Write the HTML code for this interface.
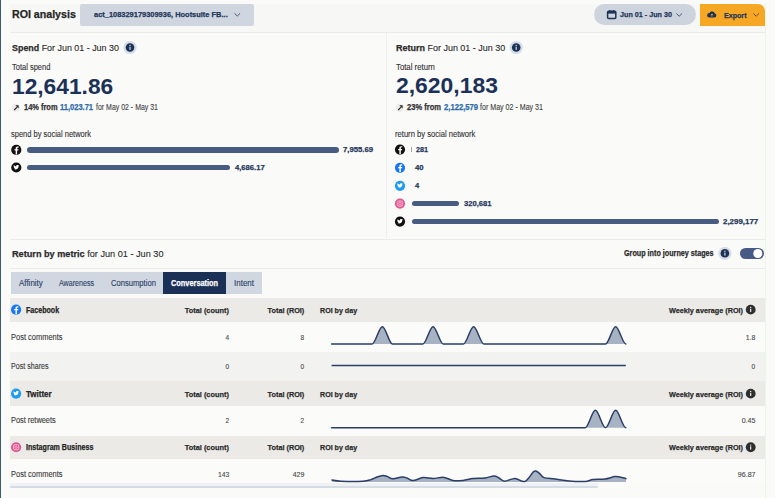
<!DOCTYPE html>
<html><head><meta charset="utf-8"><style>
html,body{margin:0;padding:0;}
body{width:775px;height:498px;overflow:hidden;background:#fafaf9;position:relative;font-family:"Liberation Sans", sans-serif;}
.b{position:absolute;}
.t{position:absolute;white-space:nowrap;-webkit-text-stroke:0.12px currentColor;}
.t[style*="font-weight:700"],.t b{-webkit-text-stroke:0.25px currentColor;}
.big{-webkit-text-stroke:0 !important;}
.t b{font-weight:700;}
svg{position:absolute;left:0;top:0;}
</style></head><body>
<div class="b" style="left:0px;top:0px;width:1.2px;height:498px;background:#3e5c67;border-radius:0;"></div><div class="b" style="left:10px;top:4px;width:755px;height:27.6px;background:#f7f7f5;border-radius:0;"></div><div class="b" style="left:80px;top:4px;width:174px;height:21.5px;background:#cfd6df;border-radius:2px;"></div><div class="b" style="left:594px;top:4.2px;width:101.70000000000005px;height:21.0px;background:#cdd4de;border-radius:11px;"></div><div class="b" style="left:699.6px;top:4.2px;width:65px;height:21.4px;background:#f6a723;border-radius:0 7px 0 0"></div><div class="b" style="left:765px;top:4px;width:1.2000000000000455px;height:494px;background:#e8f6e6;border-radius:0;"></div><div class="b" style="left:10px;top:31.6px;width:755px;height:1.0px;background:#ebebe9;border-radius:0;"></div><div class="b" style="left:386px;top:32.6px;width:1px;height:205.9px;background:#efefed;border-radius:0;"></div><div class="b" style="left:26.8px;top:147.4px;width:311.9px;height:5.199999999999989px;background:#485b80;border-radius:3px;"></div><div class="b" style="left:26.8px;top:165.0px;width:203.5px;height:5.199999999999989px;background:#485b80;border-radius:3px;"></div><div class="b" style="left:411.4px;top:146.79999999999998px;width:1.0px;height:5.600000000000023px;background:#9aa5b8;border-radius:0;"></div><div class="b" style="left:411.6px;top:201.0px;width:47.799999999999955px;height:5.199999999999989px;background:#485b80;border-radius:3px;"></div><div class="b" style="left:411.6px;top:219.0px;width:307.19999999999993px;height:5.199999999999989px;background:#485b80;border-radius:3px;"></div><div class="b" style="left:10px;top:238.5px;width:755px;height:1.0px;background:#ebebe9;border-radius:0;"></div><div class="b" style="left:740px;top:247.7px;width:23.600000000000023px;height:11.699999999999989px;background:#465a85;border-radius:6px;"></div><div class="b" style="left:10px;top:268px;width:755px;height:1px;background:#ebebe9;border-radius:0;"></div><div class="b" style="left:11.4px;top:272.3px;width:250.49999999999997px;height:21.5px;background:#d0d7e1;border-radius:0;"></div><div class="b" style="left:163.3px;top:272.3px;width:63.099999999999994px;height:21.5px;background:#1b3057;border-radius:0;"></div><div class="b" style="left:10px;top:297.6px;width:755px;height:24.099999999999966px;background:#ebeae7;border-radius:0;"></div><div class="b" style="left:10px;top:321.7px;width:755px;height:30.69999999999999px;background:#fbfbfa;border-radius:0;"></div><div class="b" style="left:10px;top:352.4px;width:755px;height:29.0px;background:#f2f2f0;border-radius:0;"></div><div class="b" style="left:10px;top:381.4px;width:755px;height:24.5px;background:#ebeae7;border-radius:0;"></div><div class="b" style="left:10px;top:405.9px;width:755px;height:29.700000000000045px;background:#fbfbfa;border-radius:0;"></div><div class="b" style="left:10px;top:435.6px;width:755px;height:23.299999999999955px;background:#ebeae7;border-radius:0;"></div><div class="b" style="left:10px;top:458.9px;width:755px;height:30.600000000000023px;background:#fbfbfa;border-radius:0;"></div><div class="b" style="left:10px;top:483px;width:588px;height:3px;background:#eef1f5;border-radius:0;"></div><div class="b" style="left:10px;top:485.8px;width:588px;height:2.3999999999999773px;background:#d6dce4;border-radius:1px;"></div><div class="b" style="left:598px;top:483px;width:167px;height:6.5px;background:#fafaf9;border-radius:0;"></div>
<svg width="775" height="498" viewBox="0 0 775 498"><path d="M234.5 13.3 L237.3 16 L240.1 13.3" fill="none" stroke="#3a4c6c" stroke-width="0.9"/><rect x="607.6" y="11.3" width="8.2" height="7.3" rx="1" fill="none" stroke="#1f3357" stroke-width="1.5"/><rect x="607.6" y="11.3" width="8.2" height="2.3" fill="#1f3357"/><rect x="609.3" y="10" width="1.2" height="2" fill="#1f3357"/><rect x="612.9" y="10" width="1.2" height="2" fill="#1f3357"/><path d="M676.3 13.5 L679.2 16.2 L682.1 13.5" fill="none" stroke="#3a4c6c" stroke-width="0.9"/><path d="M709.3 17.6 h5.2 a2.1 2.1 0 0 0 0.4 -4.1 a2.9 2.9 0 0 0 -5.4 -0.5 a2.3 2.3 0 0 0 -0.2 4.6z" fill="#1f3357"/><path d="M711.9 16.6 v-2.6 M710.8 15.1 l1.1 -1.1 l1.1 1.1" stroke="#f6a723" stroke-width="0.8" fill="none"/><path d="M753.3 13.4 L756.2 16.2 L759.1 13.4" fill="none" stroke="#6a5630" stroke-width="1"/><circle cx="130" cy="47.5" r="6.6" fill="#d6dde7"/><circle cx="130" cy="47.5" r="4.3" fill="#1c3157"/><rect x="129.35" y="46.8" width="1.3" height="3.0" fill="#c9d1dd"/><rect x="129.35" y="44.9" width="1.3" height="1.2" fill="#c9d1dd"/><circle cx="15.9" cy="107.7" r="4.2" fill="#ececea"/><path d="M14.200000000000001 110.0 L17.1 107.10000000000001" stroke="#2a2a2a" stroke-width="1.2" fill="none"/><path d="M15.3 105.3 L18.6 105.3 L18.6 108.60000000000001Z" fill="#2a2a2a"/><circle cx="16.3" cy="149.9" r="5.1" fill="#111"/><g transform="translate(16.6 150.20000000000002) scale(0.85) translate(-16.3 -149.9)"><path d="M16.900000000000002 154.9 V150.20000000000002 H18.3 L18.5 148.70000000000002 H16.900000000000002 V147.8 C16.900000000000002 147.20000000000002 17.2 146.9 17.8 146.9 H18.6 V145.6 C18.3 145.5 17.8 145.5 17.400000000000002 145.5 C16.0 145.5 15.200000000000001 146.4 15.200000000000001 147.70000000000002 V148.70000000000002 H13.8 V150.20000000000002 H15.200000000000001 V154.9Z" fill="#fff"/></g><circle cx="16.3" cy="167.5" r="5.1" fill="#111"/><g transform="translate(16.3 167.5) scale(0.85) translate(-16.3 -167.5)"><path d="M13.3 169.3 C15.3 170.5 18.900000000000002 169.5 19.0 165.9 L19.7 165.1 L18.900000000000002 165.3 L19.3 164.5 L18.400000000000002 164.8 C17.5 163.9 15.8 164.7 16.2 166.1 C14.9 166.0 13.9 165.3 13.3 164.6 C12.9 165.6 13.3 166.5 13.9 166.9 L13.3 166.7 C13.3 167.5 13.9 168.2 14.5 168.3 L13.8 168.4 C14.100000000000001 169.0 14.700000000000001 169.3 15.100000000000001 169.3 C14.5 169.7 13.9 169.5 13.3 169.3Z" fill="#fff"/></g><circle cx="516.2" cy="47.5" r="6.6" fill="#d6dde7"/><circle cx="516.2" cy="47.5" r="4.3" fill="#1c3157"/><rect x="515.5500000000001" y="46.8" width="1.3" height="3.0" fill="#c9d1dd"/><rect x="515.5500000000001" y="44.9" width="1.3" height="1.2" fill="#c9d1dd"/><circle cx="399.9" cy="107.7" r="4.2" fill="#ececea"/><path d="M398.2 110.0 L401.09999999999997 107.10000000000001" stroke="#2a2a2a" stroke-width="1.2" fill="none"/><path d="M399.29999999999995 105.3 L402.59999999999997 105.3 L402.59999999999997 108.60000000000001Z" fill="#2a2a2a"/><circle cx="400" cy="149.6" r="5.1" fill="#111"/><g transform="translate(400.3 149.9) scale(0.85) translate(-400 -149.6)"><path d="M400.6 154.6 V149.9 H402 L402.2 148.4 H400.6 V147.5 C400.6 146.9 400.9 146.6 401.5 146.6 H402.3 V145.29999999999998 C402 145.2 401.5 145.2 401.1 145.2 C399.7 145.2 398.9 146.1 398.9 147.4 V148.4 H397.5 V149.9 H398.9 V154.6Z" fill="#fff"/></g><circle cx="400" cy="167.8" r="5.1" fill="#1877f2"/><g transform="translate(400.3 168.10000000000002) scale(0.85) translate(-400 -167.8)"><path d="M400.6 172.8 V168.10000000000002 H402 L402.2 166.60000000000002 H400.6 V165.70000000000002 C400.6 165.10000000000002 400.9 164.8 401.5 164.8 H402.3 V163.5 C402 163.4 401.5 163.4 401.1 163.4 C399.7 163.4 398.9 164.3 398.9 165.60000000000002 V166.60000000000002 H397.5 V168.10000000000002 H398.9 V172.8Z" fill="#fff"/></g><circle cx="400" cy="185.8" r="5.1" fill="#1d9bf0"/><g transform="translate(400 185.8) scale(0.85) translate(-400 -185.8)"><path d="M397 187.60000000000002 C399 188.8 402.6 187.8 402.7 184.20000000000002 L403.4 183.4 L402.6 183.60000000000002 L403 182.8 L402.1 183.10000000000002 C401.2 182.20000000000002 399.5 183.0 399.9 184.4 C398.6 184.3 397.6 183.60000000000002 397 182.9 C396.6 183.9 397 184.8 397.6 185.20000000000002 L397 185.0 C397 185.8 397.6 186.5 398.2 186.60000000000002 L397.5 186.70000000000002 C397.8 187.3 398.4 187.60000000000002 398.8 187.60000000000002 C398.2 188.0 397.6 187.8 397 187.60000000000002Z" fill="#fff"/></g><circle cx="400" cy="203.6" r="5.1" fill="#e0568f"/><rect x="397.4" y="201.0" width="5.2" height="5.2" rx="1.5" fill="none" stroke="#f7c3d6" stroke-width="0.9"/><circle cx="400" cy="203.6" r="1.2" fill="none" stroke="#fbd3e0" stroke-width="0.7"/><circle cx="400" cy="221.6" r="5.1" fill="#111"/><g transform="translate(400 221.6) scale(0.85) translate(-400 -221.6)"><path d="M397 223.4 C399 224.6 402.6 223.6 402.7 220.0 L403.4 219.2 L402.6 219.4 L403 218.6 L402.1 218.9 C401.2 218.0 399.5 218.79999999999998 399.9 220.2 C398.6 220.1 397.6 219.4 397 218.7 C396.6 219.7 397 220.6 397.6 221.0 L397 220.79999999999998 C397 221.6 397.6 222.29999999999998 398.2 222.4 L397.5 222.5 C397.8 223.1 398.4 223.4 398.8 223.4 C398.2 223.79999999999998 397.6 223.6 397 223.4Z" fill="#fff"/></g><circle cx="724.9" cy="253.3" r="6.6" fill="#d6dde7"/><circle cx="724.9" cy="253.3" r="4.3" fill="#1c3157"/><rect x="724.25" y="252.60000000000002" width="1.3" height="3.0" fill="#c9d1dd"/><rect x="724.25" y="250.70000000000002" width="1.3" height="1.2" fill="#c9d1dd"/><circle cx="757.8" cy="253.5" r="4.5" fill="#fff"/><circle cx="16.1" cy="309.65" r="5.1" fill="#1877f2"/><g transform="translate(16.400000000000002 309.95) scale(0.85) translate(-16.1 -309.65)"><path d="M16.700000000000003 314.65 V309.95 H18.1 L18.3 308.45 H16.700000000000003 V307.54999999999995 C16.700000000000003 306.95 17.0 306.65 17.6 306.65 H18.400000000000002 V305.34999999999997 C18.1 305.25 17.6 305.25 17.200000000000003 305.25 C15.8 305.25 15.000000000000002 306.15 15.000000000000002 307.45 V308.45 H13.600000000000001 V309.95 H15.000000000000002 V314.65Z" fill="#fff"/></g><circle cx="750.7" cy="309.65" r="4.9" fill="#2e2e2e"/><rect x="750.15" y="308.75" width="1.1" height="3.2" fill="#fff"/><circle cx="750.7" cy="307.45" r="0.65" fill="#fff"/><circle cx="16.1" cy="393.65" r="5.1" fill="#1d9bf0"/><g transform="translate(16.1 393.65) scale(0.85) translate(-16.1 -393.65)"><path d="M13.100000000000001 395.45 C15.100000000000001 396.65 18.700000000000003 395.65 18.8 392.04999999999995 L19.5 391.25 L18.700000000000003 391.45 L19.1 390.65 L18.200000000000003 390.95 C17.3 390.04999999999995 15.600000000000001 390.84999999999997 16.0 392.25 C14.700000000000001 392.15 13.700000000000001 391.45 13.100000000000001 390.75 C12.700000000000001 391.75 13.100000000000001 392.65 13.700000000000001 393.04999999999995 L13.100000000000001 392.84999999999997 C13.100000000000001 393.65 13.700000000000001 394.34999999999997 14.3 394.45 L13.600000000000001 394.54999999999995 C13.900000000000002 395.15 14.500000000000002 395.45 14.900000000000002 395.45 C14.3 395.84999999999997 13.700000000000001 395.65 13.100000000000001 395.45Z" fill="#fff"/></g><circle cx="750.7" cy="393.65" r="4.9" fill="#2e2e2e"/><rect x="750.15" y="392.75" width="1.1" height="3.2" fill="#fff"/><circle cx="750.7" cy="391.45" r="0.65" fill="#fff"/><circle cx="16.1" cy="447.25" r="5.1" fill="#e0568f"/><rect x="13.500000000000002" y="444.65" width="5.2" height="5.2" rx="1.5" fill="none" stroke="#f7c3d6" stroke-width="0.9"/><circle cx="16.1" cy="447.25" r="1.2" fill="none" stroke="#fbd3e0" stroke-width="0.7"/><circle cx="750.7" cy="447.25" r="4.9" fill="#2e2e2e"/><rect x="750.15" y="446.35" width="1.1" height="3.2" fill="#fff"/><circle cx="750.7" cy="445.05" r="0.65" fill="#fff"/><path d="M331.60 344.00 C334.98 344.00 338.36 344.00 341.74 344.00 C345.13 344.00 348.51 344.00 351.89 344.00 C355.27 344.00 358.65 344.00 362.03 344.00 C365.42 344.00 368.80 344.00 372.18 344.00 C375.56 344.00 378.94 326.70 382.32 326.70 C385.71 326.70 389.09 344.00 392.47 344.00 C395.85 344.00 399.23 344.00 402.61 344.00 C406.00 344.00 409.38 344.00 412.76 344.00 C416.14 344.00 419.52 344.00 422.90 344.00 C426.29 344.00 429.67 326.70 433.05 326.70 C436.43 326.70 439.81 344.00 443.19 344.00 C446.57 344.00 449.96 344.00 453.34 344.00 C456.72 344.00 460.10 344.00 463.48 344.00 C466.86 344.00 470.25 326.70 473.63 326.70 C477.01 326.70 480.39 344.00 483.77 344.00 C487.15 344.00 490.54 344.00 493.92 344.00 C497.30 344.00 500.68 344.00 504.06 344.00 C507.44 344.00 510.83 344.00 514.21 344.00 C517.59 344.00 520.97 344.00 524.35 344.00 C527.73 344.00 531.11 344.00 534.50 344.00 C537.88 344.00 541.26 344.00 544.64 344.00 C548.02 344.00 551.40 344.00 554.79 344.00 C558.17 344.00 561.55 344.00 564.93 344.00 C568.31 344.00 571.69 344.00 575.08 344.00 C578.46 344.00 581.84 344.00 585.22 344.00 C588.60 344.00 591.98 344.00 595.37 344.00 C598.75 344.00 602.13 344.00 605.51 344.00 C608.89 344.00 612.27 326.70 615.66 326.70 C619.04 326.70 622.42 344.00 625.80 344.00 L625.8 344.0 L331.6 344.0Z" fill="#a7b2c3"/><path d="M331.60 344.00 C334.98 344.00 338.36 344.00 341.74 344.00 C345.13 344.00 348.51 344.00 351.89 344.00 C355.27 344.00 358.65 344.00 362.03 344.00 C365.42 344.00 368.80 344.00 372.18 344.00 C375.56 344.00 378.94 326.70 382.32 326.70 C385.71 326.70 389.09 344.00 392.47 344.00 C395.85 344.00 399.23 344.00 402.61 344.00 C406.00 344.00 409.38 344.00 412.76 344.00 C416.14 344.00 419.52 344.00 422.90 344.00 C426.29 344.00 429.67 326.70 433.05 326.70 C436.43 326.70 439.81 344.00 443.19 344.00 C446.57 344.00 449.96 344.00 453.34 344.00 C456.72 344.00 460.10 344.00 463.48 344.00 C466.86 344.00 470.25 326.70 473.63 326.70 C477.01 326.70 480.39 344.00 483.77 344.00 C487.15 344.00 490.54 344.00 493.92 344.00 C497.30 344.00 500.68 344.00 504.06 344.00 C507.44 344.00 510.83 344.00 514.21 344.00 C517.59 344.00 520.97 344.00 524.35 344.00 C527.73 344.00 531.11 344.00 534.50 344.00 C537.88 344.00 541.26 344.00 544.64 344.00 C548.02 344.00 551.40 344.00 554.79 344.00 C558.17 344.00 561.55 344.00 564.93 344.00 C568.31 344.00 571.69 344.00 575.08 344.00 C578.46 344.00 581.84 344.00 585.22 344.00 C588.60 344.00 591.98 344.00 595.37 344.00 C598.75 344.00 602.13 344.00 605.51 344.00 C608.89 344.00 612.27 326.70 615.66 326.70 C619.04 326.70 622.42 344.00 625.80 344.00" fill="none" stroke="#2a3e66" stroke-width="1.5" stroke-linejoin="round" stroke-linecap="round"/><path d="M331.6 365.4 L625.8 365.4" stroke="#2a3e66" stroke-width="1.5"/><path d="M331.60 427.70 C334.98 427.70 338.36 427.70 341.74 427.70 C345.13 427.70 348.51 427.70 351.89 427.70 C355.27 427.70 358.65 427.70 362.03 427.70 C365.42 427.70 368.80 427.70 372.18 427.70 C375.56 427.70 378.94 427.70 382.32 427.70 C385.71 427.70 389.09 427.70 392.47 427.70 C395.85 427.70 399.23 427.70 402.61 427.70 C406.00 427.70 409.38 427.70 412.76 427.70 C416.14 427.70 419.52 427.70 422.90 427.70 C426.29 427.70 429.67 427.70 433.05 427.70 C436.43 427.70 439.81 427.70 443.19 427.70 C446.57 427.70 449.96 427.70 453.34 427.70 C456.72 427.70 460.10 427.70 463.48 427.70 C466.86 427.70 470.25 427.70 473.63 427.70 C477.01 427.70 480.39 427.70 483.77 427.70 C487.15 427.70 490.54 427.70 493.92 427.70 C497.30 427.70 500.68 427.70 504.06 427.70 C507.44 427.70 510.83 427.70 514.21 427.70 C517.59 427.70 520.97 427.70 524.35 427.70 C527.73 427.70 531.11 427.70 534.50 427.70 C537.88 427.70 541.26 427.70 544.64 427.70 C548.02 427.70 551.40 427.70 554.79 427.70 C558.17 427.70 561.55 427.70 564.93 427.70 C568.31 427.70 571.69 427.70 575.08 427.70 C578.46 427.70 581.84 427.70 585.22 427.70 C588.60 427.70 591.98 410.30 595.37 410.30 C598.75 410.30 602.13 427.70 605.51 427.70 C608.89 427.70 612.27 410.30 615.66 410.30 C619.04 410.30 622.42 427.70 625.80 427.70 L625.8 427.7 L331.6 427.7Z" fill="#a7b2c3"/><path d="M331.60 427.70 C334.98 427.70 338.36 427.70 341.74 427.70 C345.13 427.70 348.51 427.70 351.89 427.70 C355.27 427.70 358.65 427.70 362.03 427.70 C365.42 427.70 368.80 427.70 372.18 427.70 C375.56 427.70 378.94 427.70 382.32 427.70 C385.71 427.70 389.09 427.70 392.47 427.70 C395.85 427.70 399.23 427.70 402.61 427.70 C406.00 427.70 409.38 427.70 412.76 427.70 C416.14 427.70 419.52 427.70 422.90 427.70 C426.29 427.70 429.67 427.70 433.05 427.70 C436.43 427.70 439.81 427.70 443.19 427.70 C446.57 427.70 449.96 427.70 453.34 427.70 C456.72 427.70 460.10 427.70 463.48 427.70 C466.86 427.70 470.25 427.70 473.63 427.70 C477.01 427.70 480.39 427.70 483.77 427.70 C487.15 427.70 490.54 427.70 493.92 427.70 C497.30 427.70 500.68 427.70 504.06 427.70 C507.44 427.70 510.83 427.70 514.21 427.70 C517.59 427.70 520.97 427.70 524.35 427.70 C527.73 427.70 531.11 427.70 534.50 427.70 C537.88 427.70 541.26 427.70 544.64 427.70 C548.02 427.70 551.40 427.70 554.79 427.70 C558.17 427.70 561.55 427.70 564.93 427.70 C568.31 427.70 571.69 427.70 575.08 427.70 C578.46 427.70 581.84 427.70 585.22 427.70 C588.60 427.70 591.98 410.30 595.37 410.30 C598.75 410.30 602.13 427.70 605.51 427.70 C608.89 427.70 612.27 410.30 615.66 410.30 C619.04 410.30 622.42 427.70 625.80 427.70" fill="none" stroke="#2a3e66" stroke-width="1.5" stroke-linejoin="round" stroke-linecap="round"/><path d="M332 480 C333.50 480.20 335.83 481.00 341 481.2 C346.17 481.40 358.00 481.47 363 481.2 C368.00 480.93 368.67 480.30 371 479.6 C373.33 478.90 375.00 477.70 377 477 C379.00 476.30 381.33 475.50 383 475.4 C384.67 475.30 385.33 475.83 387 476.4 C388.67 476.97 390.50 478.70 393 478.8 C395.50 478.90 399.67 477.13 402 477 C404.33 476.87 405.17 477.40 407 478 C408.83 478.60 410.33 480.67 413 480.6 C415.67 480.53 419.67 477.97 423 477.6 C426.33 477.23 429.50 478.43 433 478.4 C436.50 478.37 440.67 477.03 444 477.4 C447.33 477.77 449.83 480.10 453 480.6 C456.17 481.10 459.67 480.73 463 480.4 C466.33 480.07 469.33 479.00 473 478.6 C476.67 478.20 481.50 478.43 485 478 C488.50 477.57 491.67 476.00 494 476 C496.33 476.00 497.23 477.13 499 478 C500.77 478.87 501.93 481.13 504.6 481.2 C507.27 481.27 511.60 478.37 515 478.4 C518.40 478.43 521.83 482.57 525 481.4 C528.17 480.23 531.67 472.80 534 471.4 C536.33 470.00 537.33 471.97 539 473 C540.67 474.03 541.33 476.60 544 477.6 C546.67 478.60 550.83 478.43 555 479 C559.17 479.57 564.00 480.60 569 481 C574.00 481.40 581.00 481.63 585 481.4 C589.00 481.17 589.67 480.00 593 479.6 C596.33 479.20 601.33 479.50 605 479 C608.67 478.50 612.33 476.90 615 476.6 C617.67 476.30 619.17 476.87 621 477.2 C622.83 477.53 625.17 478.37 626 478.6 L626 482 L332 482Z" fill="#a7b2c3"/><path d="M332 480 C333.50 480.20 335.83 481.00 341 481.2 C346.17 481.40 358.00 481.47 363 481.2 C368.00 480.93 368.67 480.30 371 479.6 C373.33 478.90 375.00 477.70 377 477 C379.00 476.30 381.33 475.50 383 475.4 C384.67 475.30 385.33 475.83 387 476.4 C388.67 476.97 390.50 478.70 393 478.8 C395.50 478.90 399.67 477.13 402 477 C404.33 476.87 405.17 477.40 407 478 C408.83 478.60 410.33 480.67 413 480.6 C415.67 480.53 419.67 477.97 423 477.6 C426.33 477.23 429.50 478.43 433 478.4 C436.50 478.37 440.67 477.03 444 477.4 C447.33 477.77 449.83 480.10 453 480.6 C456.17 481.10 459.67 480.73 463 480.4 C466.33 480.07 469.33 479.00 473 478.6 C476.67 478.20 481.50 478.43 485 478 C488.50 477.57 491.67 476.00 494 476 C496.33 476.00 497.23 477.13 499 478 C500.77 478.87 501.93 481.13 504.6 481.2 C507.27 481.27 511.60 478.37 515 478.4 C518.40 478.43 521.83 482.57 525 481.4 C528.17 480.23 531.67 472.80 534 471.4 C536.33 470.00 537.33 471.97 539 473 C540.67 474.03 541.33 476.60 544 477.6 C546.67 478.60 550.83 478.43 555 479 C559.17 479.57 564.00 480.60 569 481 C574.00 481.40 581.00 481.63 585 481.4 C589.00 481.17 589.67 480.00 593 479.6 C596.33 479.20 601.33 479.50 605 479 C608.67 478.50 612.33 476.90 615 476.6 C617.67 476.30 619.17 476.87 621 477.2 C622.83 477.53 625.17 478.37 626 478.6" fill="none" stroke="#2a3e66" stroke-width="1.5" stroke-linejoin="round" stroke-linecap="round"/></svg>
<div class="t" id="t0" style="left:11.7px;top:9.00px;font-size:11.2px;line-height:11.2px;font-weight:700;color:#262626;transform-origin:left center;transform:scaleX(0.9498);">ROI analysis</div><div class="t" id="t1" style="left:94px;top:11.00px;font-size:7.6px;line-height:7.6px;font-weight:700;color:#24375a;transform-origin:left center;transform:scaleX(0.9806);">act_108329179309936, Hootsuite FB...</div><div class="t" id="t2" style="left:620.2px;top:11.00px;font-size:7.8px;line-height:7.8px;font-weight:700;color:#24375a;transform-origin:left center;transform:scaleX(0.9211);">Jun 01 - Jun 30</div><div class="t" id="t3" style="left:724px;top:12.00px;font-size:7.9px;line-height:7.9px;font-weight:700;color:#24375a;transform-origin:left center;transform:scaleX(0.9000);">Export</div><div class="t" id="t5" style="left:11.6px;top:43.00px;font-size:9.8px;line-height:9.8px;font-weight:400;color:#2b2b2b;transform-origin:left center;transform:scaleX(0.9088);"><b>Spend</b> For Jun 01 - Jun 30</div><div class="t" id="t6" style="left:11.6px;top:63.00px;font-size:8.4px;line-height:8.4px;font-weight:400;color:#333;transform-origin:left center;transform:scaleX(0.8939);">Total spend</div><div class="t big" id="t7" style="left:12px;top:76.00px;font-size:22.4px;line-height:22.4px;font-weight:700;color:#1c3157;transform-origin:left center;transform:scaleX(1.0158);">12,641.86</div><div class="t" id="t8" style="left:23.5px;top:104.00px;font-size:8.2px;line-height:8.2px;font-weight:700;color:#333;transform-origin:left center;transform:scaleX(0.9089);">14% from</div><div class="t" id="t9" style="left:60px;top:104.00px;font-size:8.2px;line-height:8.2px;font-weight:700;color:#2f6ca8;transform-origin:left center;transform:scaleX(0.9171);">11,023.71</div><div class="t" id="t10" style="left:96px;top:104.00px;font-size:8.2px;line-height:8.2px;font-weight:400;color:#444;transform-origin:left center;transform:scaleX(0.8515);">for May 02 - May 31</div><div class="t" id="t11" style="left:11.4px;top:130.00px;font-size:8.4px;line-height:8.4px;font-weight:400;color:#333;transform-origin:left center;transform:scaleX(0.8949);">spend by social network</div><div class="t" id="t12" style="left:343px;top:146.00px;font-size:8px;line-height:8px;font-weight:700;color:#24375a;transform-origin:left center;transform:scaleX(0.9634);">7,955.69</div><div class="t" id="t13" style="left:235px;top:164.00px;font-size:8px;line-height:8px;font-weight:700;color:#24375a;transform-origin:left center;transform:scaleX(0.9537);">4,686.17</div><div class="t" id="t14" style="left:395.7px;top:43.00px;font-size:9.8px;line-height:9.8px;font-weight:400;color:#2b2b2b;transform-origin:left center;transform:scaleX(0.9164);"><b>Return</b> For Jun 01 - Jun 30</div><div class="t" id="t15" style="left:395.7px;top:63.00px;font-size:8.4px;line-height:8.4px;font-weight:400;color:#333;transform-origin:left center;transform:scaleX(0.9283);">Total return</div><div class="t big" id="t16" style="left:395.7px;top:75.00px;font-size:22.4px;line-height:22.4px;font-weight:700;color:#1c3157;transform-origin:left center;transform:scaleX(1.0228);">2,620,183</div><div class="t" id="t17" style="left:407px;top:104.00px;font-size:8.2px;line-height:8.2px;font-weight:700;color:#333;transform-origin:left center;transform:scaleX(0.9224);">23% from</div><div class="t" id="t18" style="left:443.9px;top:104.00px;font-size:8.2px;line-height:8.2px;font-weight:700;color:#2f6ca8;transform-origin:left center;transform:scaleX(0.9358);">2,122,579</div><div class="t" id="t19" style="left:480px;top:104.00px;font-size:8.2px;line-height:8.2px;font-weight:400;color:#444;transform-origin:left center;transform:scaleX(0.8652);">for May 02 - May 31</div><div class="t" id="t20" style="left:395.4px;top:130.00px;font-size:8.4px;line-height:8.4px;font-weight:400;color:#333;transform-origin:left center;transform:scaleX(0.9090);">return by social network</div><div class="t" id="t21" style="left:415.7px;top:146.00px;font-size:8px;line-height:8px;font-weight:700;color:#24375a;transform-origin:left center;transform:scaleX(0.8982);">281</div><div class="t" id="t22" style="left:415px;top:164.00px;font-size:8px;line-height:8px;font-weight:700;color:#24375a;transform-origin:left center;transform:scaleX(0.9656);">40</div><div class="t" id="t23" style="left:415px;top:182.00px;font-size:8px;line-height:8px;font-weight:700;color:#24375a;transform-origin:left center;transform:scaleX(0.9432);">4</div><div class="t" id="t24" style="left:463.5px;top:200.00px;font-size:8px;line-height:8px;font-weight:700;color:#24375a;transform-origin:left center;transform:scaleX(0.9508);">320,681</div><div class="t" id="t25" style="left:722.8px;top:218.00px;font-size:8px;line-height:8px;font-weight:700;color:#24375a;transform-origin:left center;transform:scaleX(0.9889);">2,299,177</div><div class="t" id="t26" style="left:11.8px;top:249.00px;font-size:9.8px;line-height:9.8px;font-weight:400;color:#2b2b2b;transform-origin:left center;transform:scaleX(0.9336);"><b>Return by metric</b> for Jun 01 - Jun 30</div><div class="t" id="t27" style="left:623.7px;top:250.00px;font-size:8.2px;line-height:8.2px;font-weight:700;color:#2b2b2b;transform-origin:left center;transform:scaleX(0.8792);">Group into journey stages</div><div class="t" id="t28" style="left:19px;top:279.00px;font-size:8.4px;line-height:8.4px;font-weight:400;color:#2c4068;transform-origin:left center;transform:scaleX(0.9526);">Affinity</div><div class="t" id="t29" style="left:58.9px;top:279.00px;font-size:8.4px;line-height:8.4px;font-weight:400;color:#2c4068;transform-origin:left center;transform:scaleX(0.8503);">Awareness</div><div class="t" id="t30" style="left:110.5px;top:279.00px;font-size:8.4px;line-height:8.4px;font-weight:400;color:#2c4068;transform-origin:left center;transform:scaleX(0.9097);">Consumption</div><div class="t" id="t31" style="left:171.4px;top:279.00px;font-size:8.4px;line-height:8.4px;font-weight:700;color:#ffffff;transform-origin:left center;transform:scaleX(0.8799);">Conversation</div><div class="t" id="t32" style="left:234px;top:279.00px;font-size:8.4px;line-height:8.4px;font-weight:400;color:#2c4068;transform-origin:left center;transform:scaleX(0.9538);">Intent</div><div class="t" id="t33" style="left:25.5px;top:307.00px;font-size:8.2px;line-height:8.2px;font-weight:700;color:#262626;transform-origin:left center;transform:scaleX(0.8657);">Facebook</div><div class="t" id="t34" style="right:546.20px;top:307.00px;font-size:8px;line-height:8px;font-weight:700;color:#2b2b2b;transform-origin:right center;transform:scaleX(0.9197);">Total (count)</div><div class="t" id="t35" style="right:471.00px;top:307.00px;font-size:8px;line-height:8px;font-weight:700;color:#2b2b2b;transform-origin:right center;transform:scaleX(0.9107);">Total (ROI)</div><div class="t" id="t36" style="left:320.4px;top:307.00px;font-size:8px;line-height:8px;font-weight:700;color:#2b2b2b;transform-origin:left center;transform:scaleX(0.8876);">ROI by day</div><div class="t" id="t37" style="left:669px;top:307.00px;font-size:8px;line-height:8px;font-weight:700;color:#2b2b2b;transform-origin:left center;transform:scaleX(0.9061);">Weekly average (ROI)</div><div class="t" id="t38" style="left:11.3px;top:333.00px;font-size:8.3px;line-height:8.3px;font-weight:400;color:#3a3a3a;transform-origin:left center;transform:scaleX(0.9023);">Post comments</div><div class="t" id="t39" style="right:546.10px;top:334.00px;font-size:7.4px;line-height:7.4px;font-weight:400;color:#4a4a4a;transform-origin:right center;transform:scaleX(0.8727);">4</div><div class="t" id="t40" style="right:471.10px;top:334.00px;font-size:7.4px;line-height:7.4px;font-weight:400;color:#4a4a4a;transform-origin:right center;transform:scaleX(0.8727);">8</div><div class="t" id="t41" style="right:19.50px;top:334.00px;font-size:7.4px;line-height:7.4px;font-weight:400;color:#4a4a4a;transform-origin:right center;transform:scaleX(0.9337);">1.8</div><div class="t" id="t42" style="left:11.3px;top:362.00px;font-size:8.3px;line-height:8.3px;font-weight:400;color:#3a3a3a;transform-origin:left center;transform:scaleX(0.8559);">Post shares</div><div class="t" id="t43" style="right:546.10px;top:363.00px;font-size:7.4px;line-height:7.4px;font-weight:400;color:#4a4a4a;transform-origin:right center;transform:scaleX(0.8727);">0</div><div class="t" id="t44" style="right:471.10px;top:363.00px;font-size:7.4px;line-height:7.4px;font-weight:400;color:#4a4a4a;transform-origin:right center;transform:scaleX(0.8727);">0</div><div class="t" id="t45" style="right:19.50px;top:363.00px;font-size:7.4px;line-height:7.4px;font-weight:400;color:#4a4a4a;transform-origin:right center;transform:scaleX(0.8727);">0</div><div class="t" id="t46" style="left:25.5px;top:391.00px;font-size:8.2px;line-height:8.2px;font-weight:700;color:#262626;transform-origin:left center;transform:scaleX(0.9796);">Twitter</div><div class="t" id="t47" style="right:546.20px;top:391.00px;font-size:8px;line-height:8px;font-weight:700;color:#2b2b2b;transform-origin:right center;transform:scaleX(0.9197);">Total (count)</div><div class="t" id="t48" style="right:471.00px;top:391.00px;font-size:8px;line-height:8px;font-weight:700;color:#2b2b2b;transform-origin:right center;transform:scaleX(0.9107);">Total (ROI)</div><div class="t" id="t49" style="left:320.4px;top:391.00px;font-size:8px;line-height:8px;font-weight:700;color:#2b2b2b;transform-origin:left center;transform:scaleX(0.8876);">ROI by day</div><div class="t" id="t50" style="left:669px;top:391.00px;font-size:8px;line-height:8px;font-weight:700;color:#2b2b2b;transform-origin:left center;transform:scaleX(0.9061);">Weekly average (ROI)</div><div class="t" id="t51" style="left:11.3px;top:416.00px;font-size:8.3px;line-height:8.3px;font-weight:400;color:#3a3a3a;transform-origin:left center;transform:scaleX(0.8893);">Post retweets</div><div class="t" id="t52" style="right:546.10px;top:417.00px;font-size:7.4px;line-height:7.4px;font-weight:400;color:#4a4a4a;transform-origin:right center;transform:scaleX(0.8727);">2</div><div class="t" id="t53" style="right:471.10px;top:417.00px;font-size:7.4px;line-height:7.4px;font-weight:400;color:#4a4a4a;transform-origin:right center;transform:scaleX(0.8727);">2</div><div class="t" id="t54" style="right:19.50px;top:417.00px;font-size:7.4px;line-height:7.4px;font-weight:400;color:#4a4a4a;transform-origin:right center;transform:scaleX(0.9520);">0.45</div><div class="t" id="t55" style="left:25.5px;top:444.00px;font-size:8.2px;line-height:8.2px;font-weight:700;color:#262626;transform-origin:left center;transform:scaleX(0.8662);">Instagram Business</div><div class="t" id="t56" style="right:546.20px;top:444.00px;font-size:8px;line-height:8px;font-weight:700;color:#2b2b2b;transform-origin:right center;transform:scaleX(0.9197);">Total (count)</div><div class="t" id="t57" style="right:471.00px;top:444.00px;font-size:8px;line-height:8px;font-weight:700;color:#2b2b2b;transform-origin:right center;transform:scaleX(0.9107);">Total (ROI)</div><div class="t" id="t58" style="left:320.4px;top:444.00px;font-size:8px;line-height:8px;font-weight:700;color:#2b2b2b;transform-origin:left center;transform:scaleX(0.8876);">ROI by day</div><div class="t" id="t59" style="left:669px;top:444.00px;font-size:8px;line-height:8px;font-weight:700;color:#2b2b2b;transform-origin:left center;transform:scaleX(0.9061);">Weekly average (ROI)</div><div class="t" id="t60" style="left:11.3px;top:470.00px;font-size:8.3px;line-height:8.3px;font-weight:400;color:#3a3a3a;transform-origin:left center;transform:scaleX(0.9023);">Post comments</div><div class="t" id="t61" style="right:546.10px;top:471.00px;font-size:7.4px;line-height:7.4px;font-weight:400;color:#4a4a4a;transform-origin:right center;transform:scaleX(0.9235);">143</div><div class="t" id="t62" style="right:471.10px;top:471.00px;font-size:7.4px;line-height:7.4px;font-weight:400;color:#4a4a4a;transform-origin:right center;transform:scaleX(0.9478);">429</div><div class="t" id="t63" style="right:19.50px;top:471.00px;font-size:7.4px;line-height:7.4px;font-weight:400;color:#4a4a4a;transform-origin:right center;transform:scaleX(0.9568);">96.87</div>
</body></html>
